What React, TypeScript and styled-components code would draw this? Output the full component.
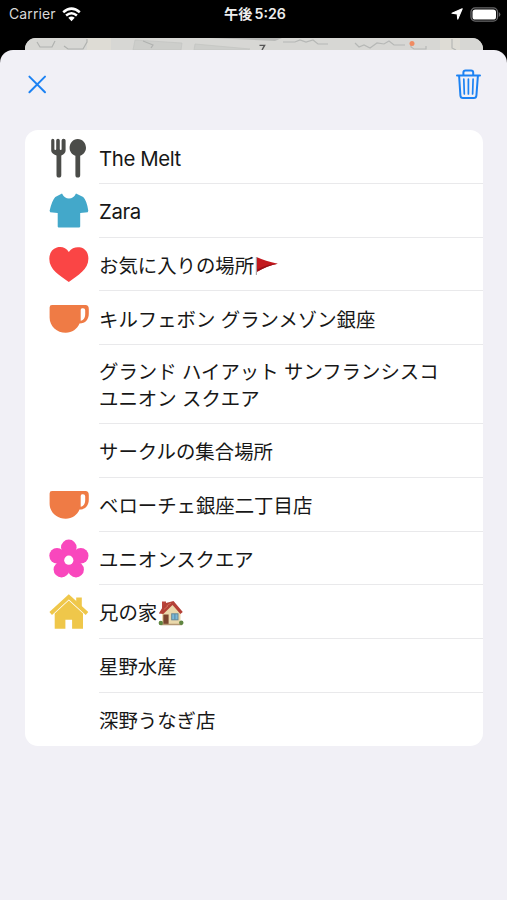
import React from "react";
import styled, { createGlobalStyle } from "styled-components";

const GlobalStyle = createGlobalStyle`
  * { box-sizing: border-box; }
  body { margin: 0; background: #000; }
`;

const Screen = styled.div`
  width: 507px;
  height: 900px;
  overflow: hidden;
  display: flex;
  flex-direction: column;
  background: #000;
  font-family: Inter, "Noto Sans CJK JP", sans-serif;
`;

const StatusBar = styled.header`
  height: 38px;
  flex: none;
  display: grid;
  grid-template-columns: 1fr auto 1fr;
  align-items: start;
  padding: 4px 6px 0 9px;
  color: #fff;
  line-height: 20px;
`;

const StatusSide = styled.div<{ $end?: boolean }>`
  height: 20px;
  display: flex;
  align-items: center;
  gap: ${(p) => (p.$end ? "7px" : "6px")};
  justify-content: ${(p) => (p.$end ? "flex-end" : "flex-start")};
`;

const Carrier = styled.span`
  font-size: 14px;
  letter-spacing: 0.1px;
  color: #d8d8d8;
`;

const Clock = styled.time`
  display: flex;
  gap: 2px;
  font-size: 14.2px;
  font-weight: 600;
  color: #eee;
`;

const MapPeek = styled.div`
  flex: none;
  height: 12px;
  margin: 0 24px 0 25px;
  border-radius: 11px 11px 0 0;
  overflow: hidden;
  background: #d5d5d2;
  svg { display: block; }
`;

const Sheet = styled.main`
  flex: 1;
  background: #f1f0f6;
  border-radius: 13px 13px 0 0;
  padding: 0 24px 0 25px;
`;

const Toolbar = styled.div`
  height: 80px;
  display: flex;
  justify-content: space-between;
  align-items: flex-start;
  padding: 18px 1px 0 2px;
`;

const IconButton = styled.button`
  border: 0;
  padding: 0;
  background: none;
  display: flex;
  color: #1c82f3;
  svg { display: block; }
`;

const List = styled.ul`
  list-style: none;
  margin: 0;
  padding: 0.4px 0 0;
  background: #fff;
  border-radius: 13px;
  overflow: hidden;
`;

const Row = styled.li<{ $tall?: boolean }>`
  display: grid;
  grid-template-columns: 74px 1fr;
  height: ${(p) => (p.$tall ? "79px" : "53.7px")};
`;

const IconCell = styled.div`
  display: flex;
  align-items: center;
  padding: 0.6px 0 0 24px;
  svg { display: block; flex: none; }
`;

const Label = styled.div<{ $latin?: boolean }>`
  display: flex;
  align-items: center;
  color: #171717;
  font-size: ${(p) => (p.$latin ? "20.4px" : "19.4px")};
  letter-spacing: ${(p) => (p.$latin ? "-0.4px" : "0")};
  line-height: 27px;
  white-space: pre-line;
  border-bottom: 1.5px solid #e9e9eb;
  padding-top: ${(p) => (p.$latin ? "3px" : "4.6px")};
  ${Row}:last-child & { border-bottom-color: transparent; }
  svg { display: block; flex: none; }
`;

const Wifi = () => (
  <svg width="19" height="15" viewBox="0 0 19 15" fill="none" stroke="#fff" strokeWidth="2.5">
    <path d="M1.2 5.2Q9.5-2 17.8 5.2M4.1 8.5Q9.5 3.9 14.9 8.5" />
    <path d="M9.5 14.2 6.3 10.8Q9.5 8.2 12.7 10.8Z" fill="#fff" stroke="none" />
  </svg>
);
const Location = () => (
  <svg width="12" height="12" viewBox="0 0 12 12">
    <path d="M11.2.8 6.8 11.1 6.2 5.9 1 5.3Z" fill="#fff" stroke="#fff" strokeWidth="1.1" strokeLinejoin="round" />
  </svg>
);
const Battery = () => (
  <svg width="31" height="15" viewBox="0 0 31 15">
    <rect x="1" y=".9" width="26.5" height="13.2" rx="4.2" fill="none" stroke="#68686a" strokeWidth="1.3" />
    <rect x="2.5" y="2.4" width="23.5" height="10.2" rx="2.7" fill="#fff" />
    <path d="M28.8 5Q32 7.5 28.8 10Z" fill="#68686a" />
  </svg>
);

const MapStrip = () => (
  <svg width="458" height="12" viewBox="0 0 458 12">
    <rect width="458" height="12" fill="#d7d7d4" />
    <path d="M62 0H86V12H62ZM415 0H435V12H415Z" fill="#dedcd5" />
    <path d="M110 2 157 5 156 12H108ZM170 6 225 11 222 12H169Z" fill="#cdcecb" stroke="#c3c4c1" strokeWidth=".7" />
    <path d="M185 0H257L250 3Z" fill="#b9bab8" />
    <path d="M12 4 15 9H27L30 3M39 8 43 11H58L62 4V1M126 10 128 7 118 3" fill="none" stroke="#b0b2b0" strokeWidth="1.2" />
    <path d="M258 4H270L275 2 281 4 288 2 293 6H303M330 5 334 9 339 7 345 10 352 5 359 6 364 3 369 7H380M386 6V9L389 11H401V8M427 1V10L431 12" fill="none" stroke="#b6b8b6" strokeWidth="1.2" />
    <circle cx="387" cy="5.5" r="2.5" fill="#f08b62" />
    <path d="M234.5 7.4H239.6L237 12" fill="none" stroke="#555" strokeWidth="1.4" />
  </svg>
);

const Close = () => (
  <svg width="20" height="34" viewBox="0 0 20 34" fill="none" stroke="currentColor" strokeWidth="2" strokeLinecap="round">
    <path d="M2.4 8.6 18 24.2M18 8.6 2.4 24.2" />
  </svg>
);
const Trash = () => (
  <svg width="27" height="34" viewBox="0 0 27 34" fill="none" stroke="currentColor" strokeWidth="2" strokeLinecap="round" strokeLinejoin="round">
    <path d="M2 7.4H25M8.4 7.2V4.6Q8.4 2.4 10.6 2.4H16Q18.2 2.4 18.2 4.6V7.2M4.1 7.8 5.4 27.5Q5.6 30.1 8 30.1H18.8Q21.2 30.1 21.4 27.5L22.9 7.8" />
    <path d="M8.8 11.2 9.3 26M13.4 11.2V26M18.1 11.2 17.6 26" strokeWidth="1.7" />
  </svg>
);

const Cutlery = () => (
  <svg width="40" height="42" viewBox="0 0 40 42" fill="#4b4c49">
    <path d="M2.2 3.6Q2.2 1.7 3.8 1.7T5.4 3.6V12.2Q5.4 13 6.3 13T7.2 12.2V3.6Q7.2 1.7 9 1.7T10.8 3.6V12.2Q10.8 13 11.7 13T12.6 12.2V3.6Q12.6 1.7 14.6 1.7T16.6 3.6V13.5Q16.6 16.5 12.3 18.4V38Q12.3 40.6 9.9 40.6T7.5 38V18.4Q2.2 16.5 2.2 13.5Z" />
    <path d="M28.7 1.9C33.7 1.9 37 6 37 10.8 37 14.6 34.5 17.5 31.2 18.8V38Q31.2 40.6 28.8 40.6T26.4 38V18.8C22.9 17.5 20.6 14.6 20.6 10.8 20.6 6 24 1.9 28.7 1.9Z" />
  </svg>
);
const Shirt = () => (
  <svg width="40" height="38" viewBox="0 0 40 38" fill="#43a8ca">
    <path d="M13 1.5Q15.5 6.6 20 6.6T27 1.5L34.2 5Q37.8 8.5 39.3 18.7L38.7 20.3 31.2 20.9V34.5Q31.2 35.6 30 35.6H9.8Q8.7 35.6 8.7 34.5V20.9L1.2 20.2 .6 18.7Q3 8.4 6.3 5Z" />
  </svg>
);
const Heart = () => (
  <svg width="40" height="38" viewBox="0 0 40 38" fill="#fa4545">
    <path d="M19.8 6C23 1.1 28.2.7 32 1.6 37 3 39.4 7.5 39.4 12.5 39.4 23.8 29 29 19.8 36 10.5 29.2.3 23.9.3 12.8.3 7.5 3 3 7.9 1.6 12.2.4 17 1.3 19.8 6Z" />
  </svg>
);
const Cup = () => (
  <svg width="40" height="32" viewBox="0 0 40 32" fill="#ef7b45">
    <path fillRule="evenodd" d="M3 2H36.5Q39.8 2 39.8 6V10.5C39.8 16.5 36.5 20.4 30.5 20.6 28.3 26 23 29.8 16.8 29.8 8 29.8.6 23.3.6 14.5V4.4Q.6 2 3 2ZM34 5.2C32.3 5.2 31.7 5.8 31.7 7.5V17.8C34.8 17.3 36.2 14.5 36.2 11V7.2Q36.2 5.2 34 5.2Z" />
  </svg>
);
const Flower = () => (
  <svg width="40" height="40" viewBox="0 0 40 40" fill="#f947bd">
    <circle cx="19.8" cy="8.4" r="7.8" />
    <circle cx="31.8" cy="16.7" r="7.7" />
    <circle cx="27" cy="30.5" r="7.9" />
    <circle cx="12.5" cy="30.5" r="7.9" />
    <circle cx="8" cy="16.7" r="7.7" />
    <circle cx="19.8" cy="20.8" r="11" />
    <circle cx="19.8" cy="21.2" r="4.6" fill="#fff" />
  </svg>
);
const Home = () => (
  <svg width="40" height="38" viewBox="0 0 40 38" fill="#efc74a">
    <path d="M1.7 20.5 19.8 3.8 38 20.5" fill="none" stroke="#efc74a" strokeWidth="3.8" />
    <path d="M27.2 4.5H32.8V15L27.2 10.2ZM19.8 7.6 34 20.6V35.8H23.1V26.8H16.4V35.8H5.7V20.6Z" />
  </svg>
);

const FlagEmoji = () => (
  <svg width="24" height="22" viewBox="0 0 24 22" role="img" aria-label="🚩">
    <path d="M2.4 2V20" stroke="#aaa7a7" strokeWidth="1.2" />
    <path d="M3 2.2Q11 5.8 23.8 8.8 13 11 3 16.8Z" fill="#c3181d" />
    <path d="M3.2 14.5V16.8Q13 11 23.8 8.8 12 9.4 3.2 14.5Z" fill="#980f16" />
  </svg>
);
const HouseEmoji = () => (
  <svg width="27" height="27" viewBox="0 0 27 27" role="img" aria-label="🏠">
    <path d="M5 1.5H9V10H5Z" fill="#ba443c" />
    <path d="M5 12.5 15 3 23.5 12.5V24.5H5Z" fill="#ead8ab" />
    <path d="M1.8 13.5 8 3.2 16.5 1 25.8 12 23.4 14 15.5 5 6.3 14Z" fill="#b44137" />
    <path d="M9.5 6 14 3M6.8 9.5 11 6" stroke="#d16b58" />
    <rect x="6.3" y="14.5" width="5.3" height="10.2" fill="#7b4630" />
    <rect x="14.7" y="13.8" width="6.3" height="6" fill="#7bb9d9" stroke="#668896" />
    <path d="M17.9 14V19.6" stroke="#5688a0" />
    <path d="M4 24.5H25" stroke="#b49774" strokeWidth="1.5" />
    <circle cx="3.8" cy="23" r="2.2" fill="#608642" />
    <circle cx="24.3" cy="22.8" r="2.2" fill="#608642" />
  </svg>
);

type Place = { name: string; icon?: React.ReactNode; emoji?: React.ReactNode; latin?: boolean; tall?: boolean };

const places: Place[] = [
  { name: "The Melt", icon: <Cutlery />, latin: true },
  { name: "Zara", icon: <Shirt />, latin: true },
  { name: "お気に入りの場所", icon: <Heart />, emoji: <FlagEmoji /> },
  { name: "キルフェボン グランメゾン銀座", icon: <Cup /> },
  { name: "グランド ハイアット サンフランシスコ\nユニオン スクエア", tall: true },
  { name: "サークルの集合場所" },
  { name: "ベローチェ銀座二丁目店", icon: <Cup /> },
  { name: "ユニオンスクエア", icon: <Flower /> },
  { name: "兄の家", icon: <Home />, emoji: <HouseEmoji /> },
  { name: "星野水産" },
  { name: "深野うなぎ店" },
];

export default function App() {
  return (
    <Screen lang="ja">
      <GlobalStyle />
      <StatusBar>
        <StatusSide>
          <Carrier>Carrier</Carrier>
          <Wifi />
        </StatusSide>
        <Clock><span>午後</span><span>5:26</span></Clock>
        <StatusSide $end>
          <Location />
          <Battery />
        </StatusSide>
      </StatusBar>
      <MapPeek><MapStrip /></MapPeek>
      <Sheet>
        <Toolbar>
          <IconButton aria-label="閉じる"><Close /></IconButton>
          <IconButton aria-label="削除"><Trash /></IconButton>
        </Toolbar>
        <List>
          {places.map((p) => (
            <Row key={p.name} $tall={p.tall}>
              <IconCell>{p.icon}</IconCell>
              <Label $latin={p.latin}>
                <span>{p.name}</span>
                {p.emoji}
              </Label>
            </Row>
          ))}
        </List>
      </Sheet>
    </Screen>
  );
}
